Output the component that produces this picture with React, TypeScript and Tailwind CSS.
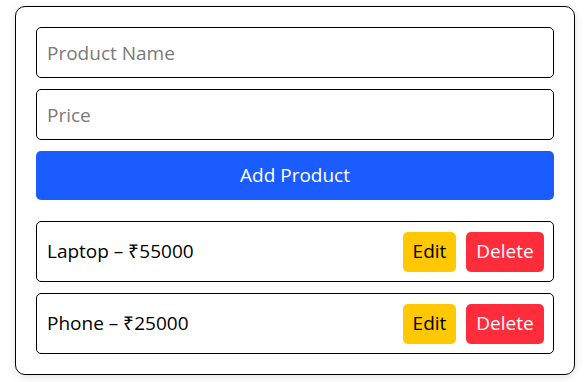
const products = [
  { name: "Laptop", price: 55000 },
  { name: "Phone", price: 25000 },
];

export default function App() {
  return (
    <div className="min-h-screen bg-white pl-[15px] pt-[6px] font-['Open_Sans',sans-serif]">
      <div className="flex w-[560px] flex-col rounded-[10px] border border-black bg-white px-5 pt-5 pb-5 shadow-[0_2px_8px_rgba(0,0,0,0.12)]">
        <div className="flex flex-col gap-[11px]">
          <input
            placeholder="Product Name"
            className="h-[51px] rounded-[5px] border border-black px-[10px] text-[19px] text-black outline-none placeholder:text-[#7a7a7a]"
          />
          <input
            placeholder="Price"
            className="h-[51px] rounded-[5px] border border-black px-[10px] text-[19px] text-black outline-none placeholder:text-[#7a7a7a]"
          />
          <button className="h-[49px] rounded-[5px] bg-[#1a5cff] text-[19px] text-white">
            Add Product
          </button>
        </div>

        <div className="mt-[21px] flex flex-col gap-[11px]">
          {products.map((p) => (
            <div
              key={p.name}
              className="flex h-[61px] items-center justify-between rounded-[5px] border border-black pl-[10px] pr-[9px]"
            >
              <span className="text-[19px] text-black">
                {p.name} – ₹{p.price}
              </span>
              <div className="flex gap-[10px]">
                <button className="h-10 w-[53px] rounded-[5px] bg-[#ffc800] text-[19px] text-black">
                  Edit
                </button>
                <button className="h-10 w-[78px] rounded-[5px] bg-[#ff2d3b] text-[19px] text-white">
                  Delete
                </button>
              </div>
            </div>
          ))}
        </div>
      </div>
    </div>
  );
}
